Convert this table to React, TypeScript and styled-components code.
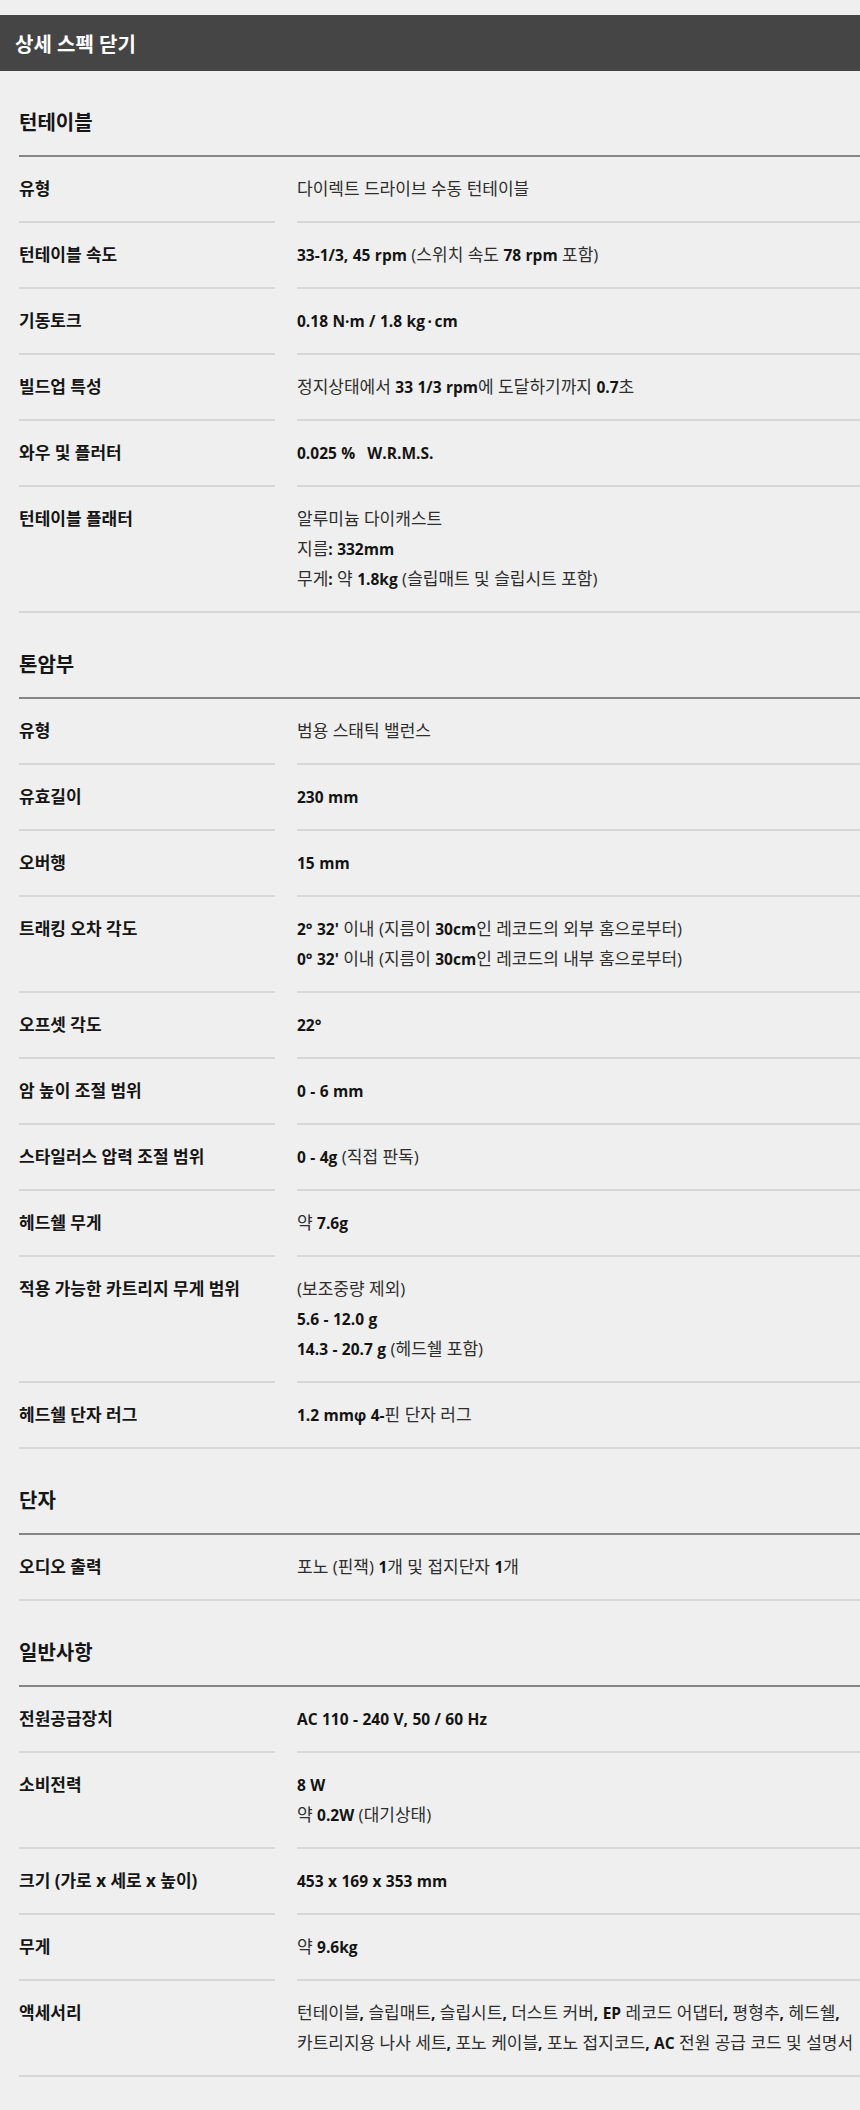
import React from "react";
import styled, { createGlobalStyle } from "styled-components";

const GlobalStyle = createGlobalStyle`
  body {
    margin: 0;
    background: #efefef;
    font-family: "Open Sans", "Noto Sans CJK KR", sans-serif;
  }
`;

const Page = styled.div`
  padding: 15px 0 30px;
`;

const TopBar = styled.div`
  height: 56px;
  display: flex;
  align-items: center;
  padding-left: 15px;
  background: #454545;
  color: #ffffff;
  font-size: 20px;
  font-weight: 700;
`;

const Content = styled.div`
  padding-left: 19px;
`;

const SectionTitle = styled.h3`
  margin: 0;
  padding: 39px 0 19px;
  line-height: 26px;
  font-size: 20px;
  font-weight: 700;
  color: #161616;
  border-bottom: 2px solid #858585;
`;

const SpecList = styled.div`
  border-bottom: 2px solid #d7d7d7;
`;

const Row = styled.div`
  display: grid;
  grid-template-columns: 256px 1fr;
  column-gap: 22px;

  &:last-child > div {
    border-bottom: none;
  }
`;

const Label = styled.div`
  padding: 17px 0;
  line-height: 30px;
  font-size: 17px;
  font-weight: 700;
  color: #151515;
  border-bottom: 2px solid #d7d7d7;
`;

const Value = styled.div`
  padding: 17px 0;
  line-height: 30px;
  font-size: 17px;
  color: #2e2e2e;
  border-bottom: 2px solid #d7d7d7;
`;

const Line = styled.p`
  margin: 0;
`;

const Strong = styled.span`
  font-size: 15.5px;
  font-weight: 700;
  color: #141414;
`;

// latin runs render bold like the original font, hangul stays regular
const Mixed = ({ text }: { text: string }) => {
  const parts = text.split(/([가-힣() ]+)/).filter((p) => p !== "");
  return (
    <>
      {parts.map((p, i) =>
        /[가-힣()]/.test(p) || p.trim() === "" ? (
          <span key={i}>{p}</span>
        ) : (
          <Strong key={i}>{p}</Strong>
        )
      )}
    </>
  );
};

interface Spec {
  label: string;
  lines: string[];
}

interface Section {
  title: string;
  specs: Spec[];
}

const sections: Section[] = [
  {
    title: "턴테이블",
    specs: [
      { label: "유형", lines: ["다이렉트 드라이브 수동 턴테이블"] },
      { label: "턴테이블 속도", lines: ["33-1/3, 45 rpm (스위치 속도 78 rpm 포함)"] },
      { label: "기동토크", lines: ["0.18 N·m / 1.8 kg\u2009·\u2009cm"] },
      { label: "빌드업 특성", lines: ["정지상태에서 33 1/3 rpm에 도달하기까지 0.7초"] },
      { label: "와우 및 플러터", lines: ["0.025 %\u00a0\u00a0\u00a0W.R.M.S."] },
      {
        label: "턴테이블 플래터",
        lines: ["알루미늄 다이캐스트", "지름: 332mm", "무게: 약 1.8kg (슬립매트 및 슬립시트 포함)"],
      },
    ],
  },
  {
    title: "톤암부",
    specs: [
      { label: "유형", lines: ["범용 스태틱 밸런스"] },
      { label: "유효길이", lines: ["230 mm"] },
      { label: "오버행", lines: ["15 mm"] },
      {
        label: "트래킹 오차 각도",
        lines: [
          "2° 32' 이내 (지름이 30cm인 레코드의 외부 홈으로부터)",
          "0° 32' 이내 (지름이 30cm인 레코드의 내부 홈으로부터)",
        ],
      },
      { label: "오프셋 각도", lines: ["22°"] },
      { label: "암 높이 조절 범위", lines: ["0 - 6 mm"] },
      { label: "스타일러스 압력 조절 범위", lines: ["0 - 4g (직접 판독)"] },
      { label: "헤드쉘 무게", lines: ["약 7.6g"] },
      {
        label: "적용 가능한 카트리지 무게 범위",
        lines: ["(보조중량 제외)", "5.6 - 12.0 g", "14.3 - 20.7 g (헤드쉘 포함)"],
      },
      { label: "헤드쉘 단자 러그", lines: ["1.2 mmφ 4-핀 단자 러그"] },
    ],
  },
  {
    title: "단자",
    specs: [{ label: "오디오 출력", lines: ["포노 (핀잭) 1개 및 접지단자 1개"] }],
  },
  {
    title: "일반사항",
    specs: [
      { label: "전원공급장치", lines: ["AC 110 - 240 V, 50 / 60 Hz"] },
      { label: "소비전력", lines: ["8 W", "약 0.2W (대기상태)"] },
      { label: "크기 (가로 x 세로 x 높이)", lines: ["453 x 169 x 353 mm"] },
      { label: "무게", lines: ["약 9.6kg"] },
      {
        label: "액세서리",
        lines: [
          "턴테이블, 슬립매트, 슬립시트, 더스트 커버, EP 레코드 어댑터, 평형추, 헤드쉘,",
          "카트리지용 나사 세트, 포노 케이블, 포노 접지코드, AC 전원 공급 코드 및 설명서",
        ],
      },
    ],
  },
];

const App: React.FC = () => {
  return (
    <Page>
      <GlobalStyle />
      <TopBar>상세 스펙 닫기</TopBar>
      <Content>
        {sections.map((section) => (
          <div key={section.title}>
            <SectionTitle>{section.title}</SectionTitle>
            <SpecList>
              {section.specs.map((spec) => (
                <Row key={spec.label}>
                  <Label>{spec.label}</Label>
                  <Value>
                    {spec.lines.map((line, i) => (
                      <Line key={i}>
                        <Mixed text={line} />
                      </Line>
                    ))}
                  </Value>
                </Row>
              ))}
            </SpecList>
          </div>
        ))}
      </Content>
    </Page>
  );
};

export default App;
